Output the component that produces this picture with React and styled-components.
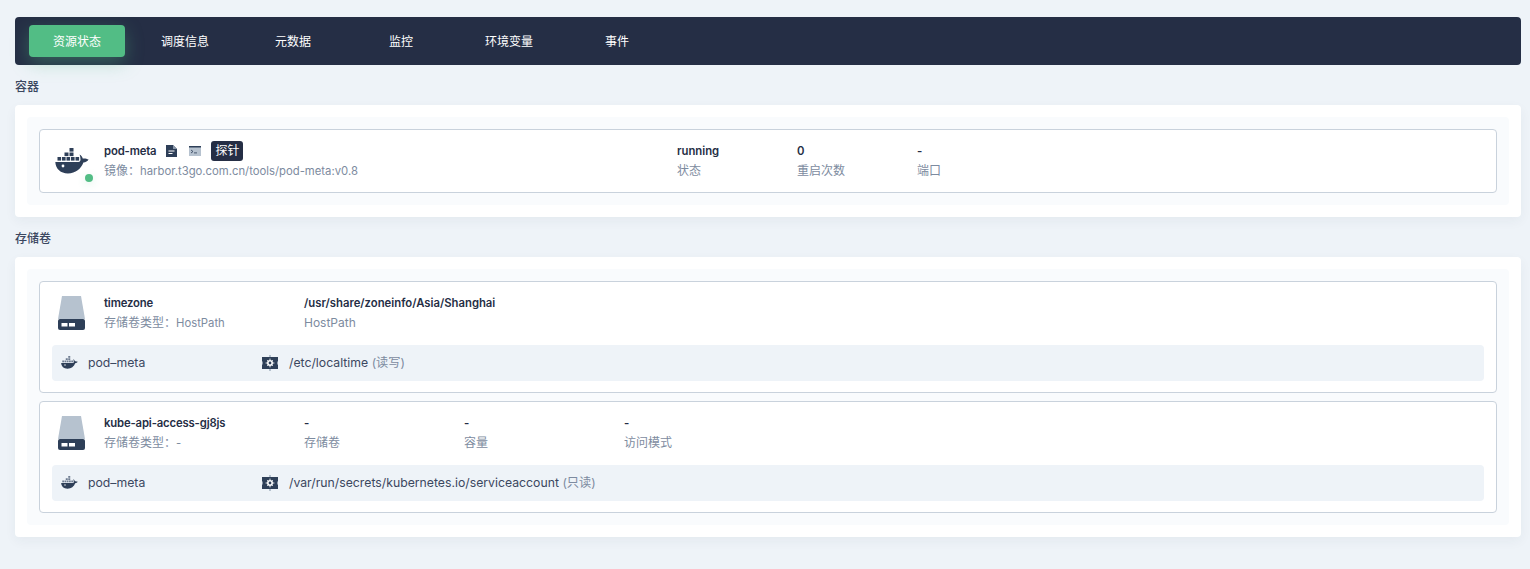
import React from "react";
import styled, { createGlobalStyle } from "styled-components";

const GlobalStyle = createGlobalStyle`
  html, body {
    margin: 0;
    background: #eef3f8;
  }
  body {
    font-family: Inter, "Noto Sans CJK SC", sans-serif;
    font-size: 12px;
    color: #252e45;
  }
  * {
    box-sizing: border-box;
  }
`;

const Page = styled.div`
  padding: 17px 9px 32px 15px;
`;

const Nav = styled.div`
  display: flex;
  gap: 12px;
  height: 48px;
  padding: 8px 14px;
  background: #252e45;
  border-radius: 4px;
`;

const Tab = styled.div`
  width: 96px;
  height: 32px;
  line-height: 34px;
  text-align: center;
  color: #fff;
  border-radius: 4px;
  background: ${(p) => (p.$active ? "#52bd85" : "transparent")};
  box-shadow: ${(p) => (p.$active ? "0 6px 18px rgba(82, 189, 133, 0.35)" : "none")};
`;

const SectionTitle = styled.div`
  height: 40px;
  padding-top: 2px;
  line-height: 40px;
  font-weight: 500;
  color: #3b4760;
`;

const Card = styled.div`
  padding: 12px;
  background: #fff;
  border-radius: 4px;
  box-shadow: 0 4px 12px rgba(30, 50, 80, 0.05);
`;

const Inner = styled.div`
  display: flex;
  flex-direction: column;
  gap: 8px;
  padding: 12px;
  background: #f9fbfd;
  border-radius: 4px;
`;

const Item = styled.div`
  padding: 11px 12px;
  background: #fff;
  border: 1px solid #c9d2dc;
  border-radius: 4px;
`;

const Head = styled.div`
  display: flex;
  align-items: center;
`;

const DockerSlot = styled.div`
  position: relative;
  width: 34px;
  height: 40px;
  margin: 0 15px 0 3px;
  display: flex;
  align-items: center;
`;

const StatusDot = styled.span`
  position: absolute;
  right: -4px;
  bottom: -1px;
  width: 8px;
  height: 8px;
  border-radius: 50%;
  background: #52bd85;
  box-shadow: 0 2px 8px rgba(82, 189, 133, 0.2);
`;

const VolumeSlot = styled.div`
  width: 27px;
  height: 34px;
  margin: 0 19px 0 6px;
`;

const Field = styled.div`
  width: ${(p) => p.$width}px;
  flex: none;
`;

const Value = styled.div`
  display: flex;
  align-items: center;
  height: 20px;
  padding-bottom: 1px;
  font-size: 11.3px;
  font-weight: 600;
  letter-spacing: ${(p) => (p.$tight ? "-0.15px" : "0")};
  color: #252e45;
  white-space: nowrap;
`;

const Label = styled.div`
  height: 20px;
  line-height: 20px;
  color: #7d8ba0;
  white-space: nowrap;
`;

// latin text in the labels runs a bit narrower than the chinese next to it
const Latin = styled.span`
  font-size: 11.3px;
`;

const ToolIcon = styled.svg`
  display: block;
  flex: none;
  margin-left: ${(p) => p.$left}px;
`;

const Badge = styled.span`
  margin-left: 10px;
  width: 32px;
  height: 20px;
  line-height: 20px;
  text-align: center;
  font-size: 12px;
  font-weight: 400;
  letter-spacing: 0;
  color: #fff;
  background: #252e45;
  border-radius: 3px;
`;

const MountRow = styled.div`
  display: flex;
  align-items: center;
  height: 36px;
  margin-top: 12px;
  padding: 0 0 2px 9px;
  background: #eef3f8;
  border-radius: 4px;
  color: #3b4760;
  font-size: 12.25px;
`;

const MountName = styled.span`
  width: 174px;
  margin-left: 10px;
  flex: none;
`;

const MountPath = styled.span`
  margin-left: 11px;
`;

const MountMode = styled.span`
  color: #7d8ba0;
`;

const MountSvg = styled.svg`
  flex: none;
  margin-top: 2px;
`;

const DockerIcon = ({ width, height, blocks = "#2e3f58" }) => (
  <svg width={width} height={height} viewBox="0 0 34 26">
    <g fill={blocks}>
      <rect x="14.5" y="0" width="4" height="3.6" />
      <rect x="9.5" y="4.5" width="4" height="3.6" />
      <rect x="14.5" y="4.5" width="4" height="3.6" />
      <rect x="2.5" y="9" width="3.6" height="3.6" />
      <rect x="7" y="9" width="3.6" height="3.6" />
      <rect x="11.5" y="9" width="3.6" height="3.6" />
      <rect x="16" y="9" width="3.6" height="3.6" />
      <rect x="20.5" y="9" width="3.6" height="3.6" />
    </g>
    <path
      fill="#2e3f58"
      d="M0.3 14h23.2c1 0 1.9-0.7 2-2.2 0-1.900-0.300-3.600-0.900-5.300 1.600 0.800 2.800 2.300 3.100 4 1.900-0.300 4-0.100 5.900 1.100-1.100 1.800-2.900 2.800-5.200 2.900-2.300 6.200-7.700 10.900-15.500 10.900-7.200 0-12.200-4.400-12.600-11.400z"
    />
    <circle cx="8" cy="18" r="1.400" fill="#fff" />
  </svg>
);

const DiskIcon = () => (
  <svg width="27" height="34" viewBox="0 0 27 34">
    <path d="M4 0H23L27 23H0Z" fill="#b6c2cf" />
    <rect x="0" y="23" width="27" height="11" rx="2" fill="#2e3f58" />
    <rect x="3.500" y="27" width="6" height="3.500" fill="#fff" />
    <rect x="11" y="27" width="6" height="3.500" fill="#fff" />
  </svg>
);

const DocIcon = () => (
  <ToolIcon $left={10} width="11" height="12" viewBox="0 0 11 12">
    <path d="M0 0H7L11 4V12H0Z" fill="#2e3f58" />
    <path d="M7 0L11 4H7Z" fill="#8996a8" />
    <rect x="2.500" y="5.500" width="6" height="1" fill="#fff" />
    <rect x="2.500" y="8" width="4" height="1" fill="#fff" />
  </ToolIcon>
);

const TerminalIcon = () => (
  <ToolIcon $left={12} width="12" height="10" viewBox="0 0 12 10">
    <rect width="12" height="10" fill="#b6c2cf" />
    <rect width="12" height="1.500" fill="#2e3f58" />
    <path d="M2 4L4 5.500L2 7" fill="none" stroke="#2e3f58" strokeWidth="0.800" />
    <rect x="5" y="6.500" width="3" height="0.800" fill="#2e3f58" />
  </ToolIcon>
);

const MountIcon = () => (
  <MountSvg width="16" height="16" viewBox="0 0 16 16">
    <rect x="7" y="0" width="2" height="16" fill="#b6c2cf" />
    <path
      d="M0 2H16V6C15.200 6.400 15.200 9.600 16 10V14H0V10C0.800 9.600 0.800 6.400 0 6Z"
      fill="#2e3f58"
    />
    <circle cx="8" cy="8" r="2.200" fill="none" stroke="#fff" strokeWidth="1.600" />
    <g stroke="#fff" strokeWidth="0.900">
      <path d="M8 3.600V5M8 11V12.400M3.600 8H5M11 8H12.400" />
      <path d="M5 5L5.800 5.800M10.200 10.200L11 11M11 5L10.200 5.800M5.800 10.200L5 11" />
    </g>
  </MountSvg>
);

const tabs = ["资源状态", "调度信息", "元数据", "监控", "环境变量", "事件"];

const volumes = [
  {
    name: "timezone",
    type: "HostPath",
    fields: [{ width: 200, value: "/usr/share/zoneinfo/Asia/Shanghai", label: "HostPath" }],
    path: "/etc/localtime",
    mode: "(读写)",
  },
  {
    name: "kube-api-access-gj8js",
    type: "-",
    fields: [
      { width: 160, value: "-", label: "存储卷" },
      { width: 160, value: "-", label: "容量" },
      { width: 160, value: "-", label: "访问模式" },
    ],
    path: "/var/run/secrets/kubernetes.io/serviceaccount",
    mode: "(只读)",
  },
];

export default function App() {
  return (
    <Page>
      <GlobalStyle />
      <Nav>
        {tabs.map((t, i) => (
          <Tab key={t} $active={i === 0}>
            {t}
          </Tab>
        ))}
      </Nav>

      <SectionTitle>容器</SectionTitle>
      <Card>
        <Inner>
          <Item>
            <Head>
              <DockerSlot>
                <DockerIcon width={34} height={26} />
                <StatusDot />
              </DockerSlot>
              <Field $width={573}>
                <Value $tight>
                  pod-meta
                  <DocIcon />
                  <TerminalIcon />
                  <Badge>探针</Badge>
                </Value>
                <Label>
                  镜像：<Latin>harbor.t3go.com.cn/tools/pod-meta:v0.8</Latin>
                </Label>
              </Field>
              <Field $width={120}>
                <Value>running</Value>
                <Label>状态</Label>
              </Field>
              <Field $width={120}>
                <Value>0</Value>
                <Label>重启次数</Label>
              </Field>
              <Field $width={120}>
                <Value>-</Value>
                <Label>端口</Label>
              </Field>
            </Head>
          </Item>
        </Inner>
      </Card>

      <SectionTitle>存储卷</SectionTitle>
      <Card>
        <Inner>
          {volumes.map((v) => (
            <Item key={v.name}>
              <Head>
                <VolumeSlot>
                  <DiskIcon />
                </VolumeSlot>
                <Field $width={200}>
                  <Value $tight>{v.name}</Value>
                  <Label>
                    存储卷类型：<Latin>{v.type}</Latin>
                  </Label>
                </Field>
                {v.fields.map((f) => (
                  <Field key={f.label} $width={f.width}>
                    <Value>{f.value}</Value>
                    <Label>{f.label}</Label>
                  </Field>
                ))}
              </Head>
              <MountRow>
                <DockerIcon width={17} height={13} blocks="#6f7d91" />
                <MountName>pod–meta</MountName>
                <MountIcon />
                <MountPath>
                  {v.path} <MountMode>{v.mode}</MountMode>
                </MountPath>
              </MountRow>
            </Item>
          ))}
        </Inner>
      </Card>
    </Page>
  );
}
